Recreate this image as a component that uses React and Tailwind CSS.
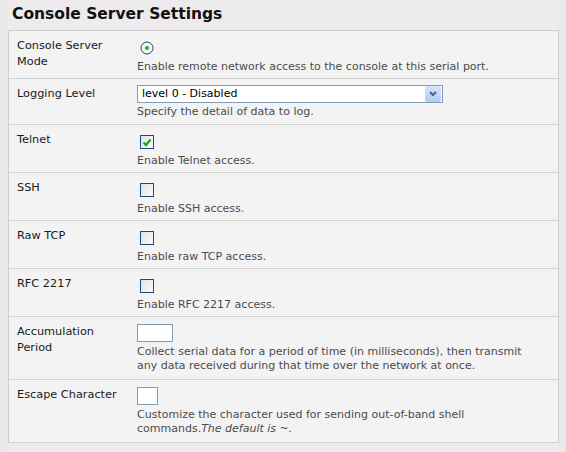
import React from 'react';

const font = { fontFamily: '"DejaVu Sans", Verdana, sans-serif' };

const Radio = () => (
  <svg width="14" height="14" viewBox="0 0 14 14" className="block">
    <circle cx="7" cy="7" r="6" fill="#f4f4f4" stroke="#1d4a78" strokeWidth="1" />
    <circle cx="7" cy="7" r="2" fill="#22b11e" />
  </svg>
);

const Checkbox = ({ checked }) => (
  <div className="w-[14px] h-[14px] border border-[#1d4a78] bg-gradient-to-br from-[#e2e2de] to-[#fbfbf9] flex items-center justify-center">
    {checked && (
      <svg width="10" height="9" viewBox="0 0 10 9">
        <path d="M1.5 4.5 L4 7 L8.5 1.5" fill="none" stroke="#21a121" strokeWidth="2.2" />
      </svg>
    )}
  </div>
);

const Row = ({ label, h, children }) => (
  <div className={`grid grid-cols-[128px_1fr] border-b border-[#d2d2d2] ${h}`}>
    <div className="pl-[8px] pt-[7px] text-[11.3px] leading-[16px] text-[#1a1a1a]">{label}</div>
    <div className="pt-[6px] pr-[20px]">{children}</div>
  </div>
);

const Desc = ({ children }) => (
  <p className="text-[11px] leading-[14px] text-[#4b4b4b]">{children}</p>
);

export default function App() {
  const checks = [
    { label: 'Telnet', on: true, desc: 'Enable Telnet access.' },
    { label: 'SSH', on: false, desc: 'Enable SSH access.' },
    { label: 'Raw TCP', on: false, desc: 'Enable raw TCP access.' },
    { label: 'RFC 2217', on: false, desc: 'Enable RFC 2217 access.' },
  ];

  return (
    <div className="w-[566px] h-[452px] bg-[#e8e8e8] flex" style={font}>
      <div className="ml-[8px] w-[551px] bg-[#eeebee] h-full">
        <h1 className="pl-[4px] pt-[3px] h-[30px] text-[15.5px] font-bold text-[#111] leading-[22px]">
          Console Server Settings
        </h1>
        <div className="border border-[#cfcfcf] border-b-0 bg-[#f3f3f3]">
          <Row label={<>Console Server<br />Mode</>} h="h-[48px]">
            <div className="ml-[3px] mt-[4px] mb-[5px]"><Radio /></div>
            <Desc>Enable remote network access to the console at this serial port.</Desc>
          </Row>
          <Row label="Logging Level" h="h-[46px]">
            <div className="w-[306px] h-[18px] border border-[#7f9db9] bg-white flex items-center justify-between">
              <span className="pl-[4px] text-[11px] text-black">level 0 - Disabled</span>
              <div className="w-[16px] h-[16px] mr-[1px] rounded-[2px] bg-gradient-to-b from-[#d6e2fc] to-[#b5c9f5] flex items-center justify-center">
                <svg width="8" height="6" viewBox="0 0 8 6">
                  <path d="M1 1 L4 4 L7 1" fill="none" stroke="#4d6185" strokeWidth="2" />
                </svg>
              </div>
            </div>
            <div className="mt-[2px]"><Desc>Specify the detail of data to log.</Desc></div>
          </Row>
          {checks.map((c) => (
            <Row key={c.label} label={c.label} h="h-[48px]">
              <div className="ml-[3px] mt-[4px] mb-[5px]"><Checkbox checked={c.on} /></div>
              <Desc>{c.desc}</Desc>
            </Row>
          ))}
          <Row label={<>Accumulation<br />Period</>} h="h-[63px]">
            <div className="w-[36px] h-[18px] border border-[#7f9db9] bg-white mt-[1px] mb-[3px]" />
            <Desc>
              Collect serial data for a period of time (in milliseconds), then transmit any data received during that time over the network at once.
            </Desc>
          </Row>
          <Row label="Escape Character" h="h-[63px]">
            <div className="w-[21px] h-[18px] border border-[#7f9db9] bg-white mt-[1px] mb-[3px]" />
            <Desc>
              Customize the character used for sending out-of-band shell commands.<i>The default is ~.</i>
            </Desc>
          </Row>
        </div>
      </div>
    </div>
  );
}
